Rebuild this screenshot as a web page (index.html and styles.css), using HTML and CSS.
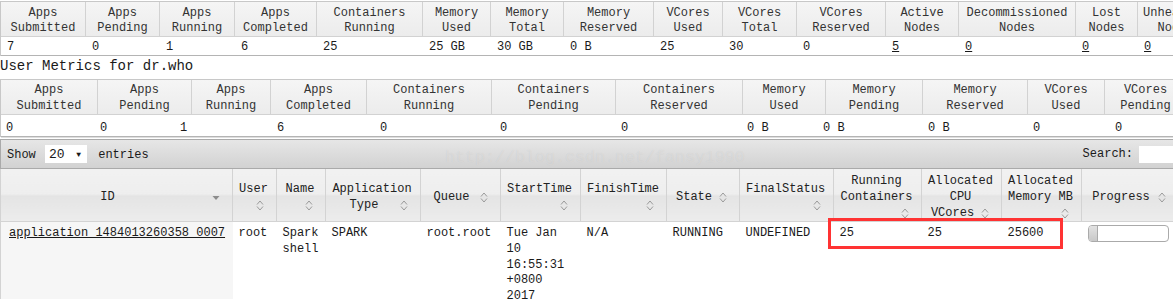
FILE: index.html
```html
<!DOCTYPE html>
<html lang="en">
<head>
    <meta charset="UTF-8">
    <title>All Applications</title>
    <link rel="stylesheet" href="styles.css">
</head>
<body>
    <!-- Cluster Metrics -->
    <div class="metrics metrics-first">
        <div class="metrics-head cluster-cols">
            <div>Apps<br>Submitted</div>
            <div>Apps<br>Pending</div>
            <div>Apps<br>Running</div>
            <div>Apps<br>Completed</div>
            <div>Containers<br>Running</div>
            <div>Memory<br>Used</div>
            <div>Memory<br>Total</div>
            <div>Memory<br>Reserved</div>
            <div>VCores<br>Used</div>
            <div>VCores<br>Total</div>
            <div>VCores<br>Reserved</div>
            <div>Active<br>Nodes</div>
            <div>Decommissioned<br>Nodes</div>
            <div>Lost<br>Nodes</div>
            <div>Unhealthy<br>Nodes</div>
            <div>Rebooted<br>Nodes</div>
        </div>
        <div class="metrics-data cluster-cols">
            <div>7</div>
            <div>0</div>
            <div>1</div>
            <div>6</div>
            <div>25</div>
            <div>25 GB</div>
            <div>30 GB</div>
            <div>0 B</div>
            <div>25</div>
            <div>30</div>
            <div>0</div>
            <div><a href="#">5</a></div>
            <div><a href="#">0</a></div>
            <div><a href="#">0</a></div>
            <div><a href="#">0</a></div>
            <div><a href="#">0</a></div>
        </div>
    </div>

    <div class="section-title">User Metrics for dr.who</div>

    <!-- User Metrics -->
    <div class="metrics metrics-user">
        <div class="metrics-head user-cols">
            <div>Apps<br>Submitted</div>
            <div>Apps<br>Pending</div>
            <div>Apps<br>Running</div>
            <div>Apps<br>Completed</div>
            <div>Containers<br>Running</div>
            <div>Containers<br>Pending</div>
            <div>Containers<br>Reserved</div>
            <div>Memory<br>Used</div>
            <div>Memory<br>Pending</div>
            <div>Memory<br>Reserved</div>
            <div>VCores<br>Used</div>
            <div>VCores<br>Pending</div>
            <div>VCores<br>Reserved</div>
        </div>
        <div class="metrics-data user-data-cols">
            <div>0</div>
            <div>0</div>
            <div>1</div>
            <div>6</div>
            <div>0</div>
            <div>0</div>
            <div>0</div>
            <div>0 B</div>
            <div>0 B</div>
            <div>0 B</div>
            <div>0</div>
            <div>0</div>
            <div>0</div>
        </div>
    </div>

    <!-- Applications -->
    <div class="apps">
        <div class="toolbar">
            <div class="length">
                Show
                <span class="select"><span>20</span><span class="caret">&#9660;</span></span>
                entries
            </div>
            <div class="search">
                Search: <span class="search-input"></span>
            </div>
        </div>

        <table class="apps-table">
            <colgroup>
                <col style="width: 232px">
                <col style="width: 44px">
                <col style="width: 49px">
                <col style="width: 95px">
                <col style="width: 80px">
                <col style="width: 80px">
                <col style="width: 86px">
                <col style="width: 73px">
                <col style="width: 94px">
                <col style="width: 88px">
                <col style="width: 80px">
                <col style="width: 80px">
                <col style="width: 97px">
            </colgroup>
            <thead>
                <tr>
                    <th>ID<span class="sort"><svg width="16" height="16" viewBox="0 0 16 16"><path d="M4.5 7h7l-3.5 4z" fill="#8c8c8c"/></svg></span></th>
                    <th>User<span class="sort"><svg width="16" height="16" viewBox="0 0 16 16"><path d="M5 7.5l3-3.5 3 3.5M5 9.5l3 3.5 3-3.5" fill="none" stroke="#9a9a9a"/></svg></span></th>
                    <th>Name<span class="sort"><svg width="16" height="16" viewBox="0 0 16 16"><path d="M5 7.5l3-3.5 3 3.5M5 9.5l3 3.5 3-3.5" fill="none" stroke="#9a9a9a"/></svg></span></th>
                    <th>Application Type<span class="sort"><svg width="16" height="16" viewBox="0 0 16 16"><path d="M5 7.5l3-3.5 3 3.5M5 9.5l3 3.5 3-3.5" fill="none" stroke="#9a9a9a"/></svg></span></th>
                    <th>Queue<span class="sort"><svg width="16" height="16" viewBox="0 0 16 16"><path d="M5 7.5l3-3.5 3 3.5M5 9.5l3 3.5 3-3.5" fill="none" stroke="#9a9a9a"/></svg></span></th>
                    <th>StartTime<span class="sort"><svg width="16" height="16" viewBox="0 0 16 16"><path d="M5 7.5l3-3.5 3 3.5M5 9.5l3 3.5 3-3.5" fill="none" stroke="#9a9a9a"/></svg></span></th>
                    <th>FinishTime<span class="sort"><svg width="16" height="16" viewBox="0 0 16 16"><path d="M5 7.5l3-3.5 3 3.5M5 9.5l3 3.5 3-3.5" fill="none" stroke="#9a9a9a"/></svg></span></th>
                    <th>State<span class="sort"><svg width="16" height="16" viewBox="0 0 16 16"><path d="M5 7.5l3-3.5 3 3.5M5 9.5l3 3.5 3-3.5" fill="none" stroke="#9a9a9a"/></svg></span></th>
                    <th>FinalStatus<span class="sort"><svg width="16" height="16" viewBox="0 0 16 16"><path d="M5 7.5l3-3.5 3 3.5M5 9.5l3 3.5 3-3.5" fill="none" stroke="#9a9a9a"/></svg></span></th>
                    <th>Running Containers<span class="sort"><svg width="16" height="16" viewBox="0 0 16 16"><path d="M5 7.5l3-3.5 3 3.5M5 9.5l3 3.5 3-3.5" fill="none" stroke="#9a9a9a"/></svg></span></th>
                    <th>Allocated CPU VCores<span class="sort"><svg width="16" height="16" viewBox="0 0 16 16"><path d="M5 7.5l3-3.5 3 3.5M5 9.5l3 3.5 3-3.5" fill="none" stroke="#9a9a9a"/></svg></span></th>
                    <th>Allocated Memory MB<span class="sort"><svg width="16" height="16" viewBox="0 0 16 16"><path d="M5 7.5l3-3.5 3 3.5M5 9.5l3 3.5 3-3.5" fill="none" stroke="#9a9a9a"/></svg></span></th>
                    <th>Progress<span class="sort"><svg width="16" height="16" viewBox="0 0 16 16"><path d="M5 7.5l3-3.5 3 3.5M5 9.5l3 3.5 3-3.5" fill="none" stroke="#9a9a9a"/></svg></span></th>
                </tr>
            </thead>
            <tbody>
                <tr>
                    <td class="sorted"><a href="#">application_1484013260358_0007</a></td>
                    <td>root</td>
                    <td>Spark shell</td>
                    <td>SPARK</td>
                    <td>root.root</td>
                    <td>Tue Jan 10 16:55:31 +0800 2017</td>
                    <td>N/A</td>
                    <td>RUNNING</td>
                    <td>UNDEFINED</td>
                    <td>25</td>
                    <td>25</td>
                    <td>25600</td>
                    <td><div class="progress"><div class="progress-fill"></div></div></td>
                </tr>
            </tbody>
        </table>

        <div class="watermark">http://blog.csdn.net/fansy1990</div>
        <div class="highlight"></div>
    </div>
</body>
</html>
```

FILE: styles.css
```css
* {
    box-sizing: border-box;
}

html, body {
    margin: 0;
    overflow: hidden;
}

body {
    font-family: "Liberation Mono", "DejaVu Sans Mono", monospace;
    font-size: 12px;
    color: #1a1a1a;
    background-color: #fff;
    width: 1173px;
    height: 299px;
}

a {
    color: #1a1a1a;
}

/* metrics tables */

.metrics {
    border-top: 1px solid #c8c8c8;
    border-left: 1px solid #c8c8c8;
    width: max-content;
}

.metrics-first {
    margin-top: 1px;
}

.metrics-head,
.metrics-data {
    display: grid;
}

.cluster-cols {
    grid-template-columns: 85px 74px 75px 82px 106px 68px 73px 90px 69px 74px 89px 73px 117px 62px 76px 80px;
}

.user-cols {
    grid-template-columns: 97px 94px 79px 96px 125px 124px 127px 83px 97px 105px 77px 82px 100px;
}

.user-data-cols {
    grid-template-columns: 94px 80px 97px 103px 120px 121px 126px 76px 105px 105px 82px 100px 100px;
}

.metrics-head {
    background: linear-gradient(#f5f5f5, #ececec);
    border-bottom: 1px solid #d2d2d2;
}

.metrics-head div {
    border-right: 1px solid #d2d2d2;
    text-align: center;
    line-height: 15px;
    padding: 4px 0 0;
    color: #333;
    white-space: nowrap;
}

.metrics-data {
    border-bottom: 1px solid #b4b4b4;
}

.metrics-data div {
    line-height: 15px;
    padding: 3px 0 0 6px;
    white-space: nowrap;
}

.metrics-user .metrics-head div {
    padding: 3px 0 0;
    line-height: 15.5px;
}

.metrics-user .metrics-data div {
    padding: 6px 0 0 5px;
}

.metrics-user .metrics-data {
    box-shadow: 0 1px 0 #dedede;
}

.section-title {
    font-size: 14px;
    line-height: 16px;
    padding: 2px 0 5px;
}

/* applications */

.apps {
    position: relative;
    margin-top: 2px;
}

.toolbar {
    display: flex;
    justify-content: space-between;
    align-items: center;
    width: 1205px;
    height: 30px;
    padding: 0 5px 0 6px;
    border: 1px solid #aaa;
    background: linear-gradient(#e6e6e6, #d2d2d2);
}

.select {
    display: inline-flex;
    justify-content: space-between;
    align-items: center;
    width: 42px;
    height: 18px;
    margin: 0 4px 0 2px;
    padding: 0 6px 0 4px;
    background-color: #fff;
    font-size: 13px;
}

.caret {
    font-size: 8px;
}

.search {
    display: flex;
    align-items: center;
}

.search-input {
    display: inline-block;
    width: 60px;
    height: 17px;
    margin-left: 6px;
    background-color: #fff;
}

.apps-table {
    width: 1178px;
    table-layout: fixed;
    border-collapse: collapse;
    border-left: 1px solid #d3d3d3;
}

.apps-table th {
    height: 49px;
    padding: 4px 8px 0 6px;
    font-weight: normal;
    line-height: 16px;
    color: #222;
    text-align: center;
    vertical-align: middle;
    border-right: 1px solid #d3d3d3;
    border-bottom: 1px solid #d3d3d3;
    background: linear-gradient(#f1f1f1 0%, #eeeeee 48%, #e4e4e4 52%, #ececec 100%);
}

.sort {
    float: right;
    width: 16px;
    height: 16px;
}

.sort svg {
    display: block;
}

.apps-table td {
    height: 80px;
    padding: 4px 6px 0;
    vertical-align: top;
    line-height: 15.75px;
}

.apps-table td.sorted {
    padding-left: 8px;
    background-color: #f6f6f6;
}

.progress {
    width: 81px;
    height: 17px;
    margin-top: -1px;
    border: 1px solid #aaa;
    border-radius: 4px;
    background-color: #fff;
    overflow: hidden;
}

.progress-fill {
    width: 9px;
    height: 100%;
    border-right: 1px solid #aaa;
    background: linear-gradient(#e2e2e2, #c8c8c8);
}

.watermark {
    position: absolute;
    left: 445px;
    top: 9px;
    font-size: 16.67px;
    line-height: 20px;
    color: rgba(255, 255, 255, 0.25);
    text-shadow: 0 0 1px rgba(0, 0, 0, 0.08);
    pointer-events: none;
}

.highlight {
    position: absolute;
    left: 828px;
    top: 79px;
    width: 235px;
    height: 31px;
    border: 3px solid #f33;
}
```
